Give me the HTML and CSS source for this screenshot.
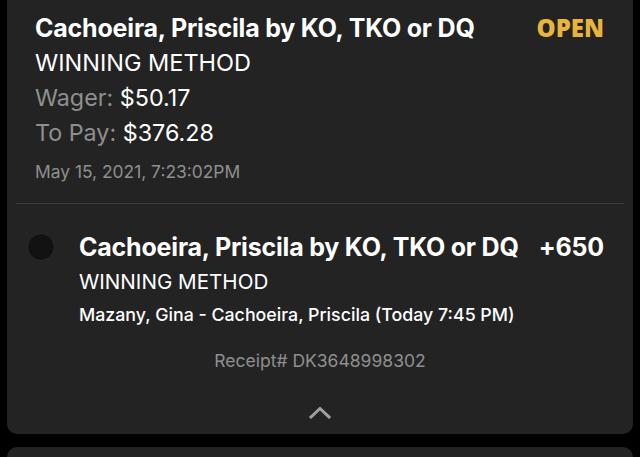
FILE: index.html
```html
<!DOCTYPE html>
<html>
<head>
<meta charset="utf-8">
<link rel="stylesheet" href="styles.css">
</head>
<body>
<div class="card">
  <div class="summary">
    <div class="title-row">
      <span class="title">Cachoeira, Priscila by KO, TKO or DQ</span>
      <span class="status">OPEN</span>
    </div>
    <div class="market">WINNING METHOD</div>
    <div class="amount"><span class="label">Wager:</span> $50.17</div>
    <div class="amount"><span class="label">To Pay:</span> $376.28</div>
    <div class="date">May 15, 2021, 7:23:02PM</div>
  </div>
  <div class="sep"></div>
  <div class="leg">
    <div class="dot"></div>
    <div class="leg-body">
      <div class="leg-row">
        <span class="leg-title">Cachoeira, Priscila by KO, TKO or DQ</span>
        <span class="odds">+650</span>
      </div>
      <div class="leg-market">WINNING METHOD</div>
      <div class="event">Mazany, Gina - Cachoeira, Priscila (Today 7:45 PM)</div>
    </div>
  </div>
  <div class="receipt">Receipt# DK3648998302</div>
  <div class="chevron">
    <svg width="22" height="13" viewBox="0 0 22 13"><path d="M2 11 L11 2.5 L20 11" fill="none" stroke="#a0a0a0" stroke-width="3" stroke-linecap="square"/></svg>
  </div>
</div>
<div class="card next"></div>
</body>
</html>
```
FILE: styles.css
```css
html, body {
  margin: 0;
  padding: 0;
  background: #000;
  height: 457px;
  overflow: hidden;
}
body {
  font-family: Inter, "Liberation Sans", sans-serif;
  color: #fff;
}
.card {
  margin: 0 7px;
  background: #232323;
  border-radius: 0 0 10px 10px;
  height: 434px;
  box-sizing: border-box;
}
.card.next {
  margin-top: 13px;
  border-radius: 10px 10px 0 0;
  height: 10px;
}
.summary {
  padding: 10px 29px 0 28px;
}
.title-row {
  display: flex;
  justify-content: space-between;
  align-items: center;
  height: 35px;
}
.title {
  font-size: 25px;
  font-weight: 700;
  letter-spacing: -0.2px;
}
.status {
  font-family: "Open Sans", sans-serif;
  font-weight: 800;
  font-size: 24px;
  color: #e9b43c;
}
.market {
  font-size: 23.5px;
  line-height: 35px;
}
.amount {
  font-size: 23.3px;
  line-height: 35px;
}
.label {
  color: #8f8f8f;
}
.date {
  margin-top: 10px;
  font-size: 17.4px;
  line-height: 24px;
  color: #8f8f8f;
}
.sep {
  margin: 19px 9px 0;
  height: 1px;
  background: #3a3a3a;
}
.leg {
  display: flex;
  padding: 28px 29px 0 20px;
}
.dot {
  width: 26px;
  height: 26px;
  border-radius: 50%;
  background: #121212;
  border: 1px solid #2c2c2c;
  margin-top: 1px;
  flex: none;
}
.leg-body {
  flex: 1;
  margin-left: 24px;
}
.leg-row {
  display: flex;
  justify-content: space-between;
  align-items: center;
  height: 30px;
}
.leg-title, .odds {
  font-size: 25px;
  font-weight: 700;
  letter-spacing: -0.2px;
}
.leg-market {
  font-size: 20.6px;
  line-height: 33px;
  margin-top: 3px;
}
.event {
  font-size: 17.8px;
  font-weight: 500;
  line-height: 33px;
}
.receipt {
  text-align: center;
  font-size: 17.5px;
  line-height: 24px;
  color: #8f8f8f;
  margin-top: 18px;
}
.chevron {
  display: flex;
  justify-content: center;
  margin-top: 33px;
}
```
